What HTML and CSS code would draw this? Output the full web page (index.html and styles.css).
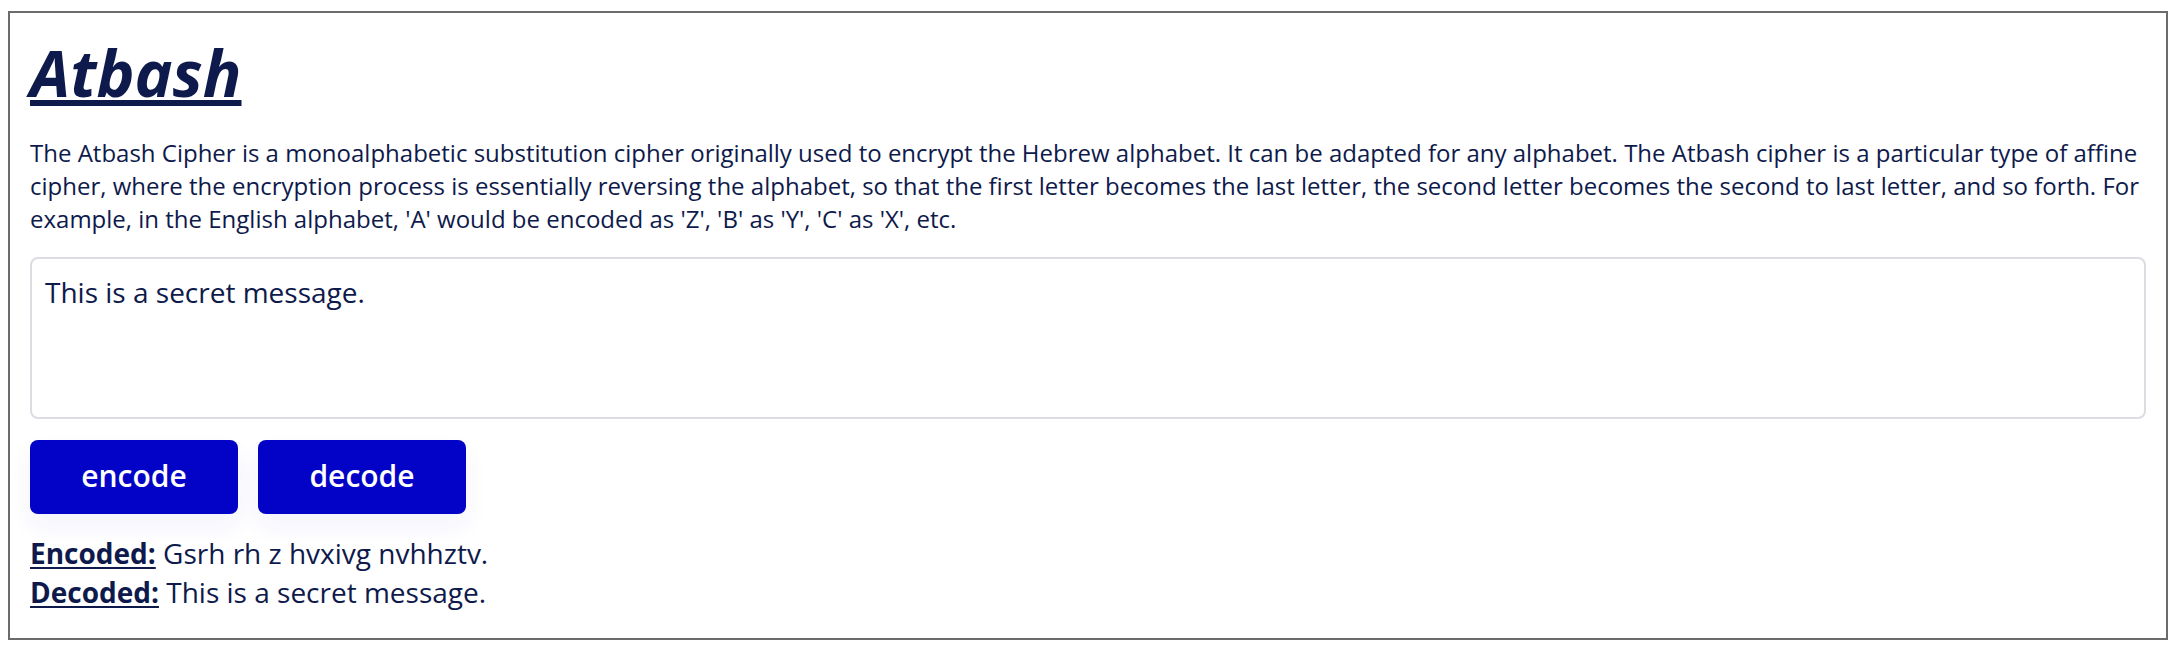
FILE: index.html
```html
<!DOCTYPE html>
<html lang="en">
<head>
<meta charset="utf-8">
<title>Atbash</title>
<link rel="stylesheet" href="styles.css">
</head>
<body>
<main class="card">
  <h1 class="title">Atbash</h1>
  <p class="intro">The Atbash Cipher is a monoalphabetic substitution cipher originally used to encrypt the Hebrew alphabet. It can be adapted for any alphabet. The Atbash cipher is a particular type of affine cipher, where the encryption process is essentially reversing the alphabet, so that the first letter becomes the last letter, the second letter becomes the second to last letter, and so forth. For example, in the English alphabet, 'A' would be encoded as 'Z', 'B' as 'Y', 'C' as 'X', etc.</p>
  <textarea class="input">This is a secret message.</textarea>
  <div class="actions">
    <button class="btn" type="button">encode</button>
    <button class="btn" type="button">decode</button>
  </div>
  <div class="results">
    <div class="result"><span class="label">Encoded:</span> Gsrh rh z hvxivg nvhhztv.</div>
    <div class="result"><span class="label">Decoded:</span> This is a secret message.</div>
  </div>
</main>
</body>
</html>
```
FILE: styles.css
```css
html, body {
  background: #ffffff;
}
body {
  margin: 11px 12px 10px 8px;
  font-family: "Open Sans", "Noto Sans", sans-serif;
  color: #0e1a4b;
}
.card {
  border: 2px solid #6b6b6b;
  padding: 16px 20px 26px 20px;
  height: 629px;
  box-sizing: border-box;
}
.title {
  margin: 0 0 20px 0;
  font-size: 64px;
  font-weight: 700;
  font-style: italic;
  line-height: normal;
  color: #0e1a4b;
  display: inline-block;
  text-decoration: underline;
  text-decoration-thickness: 6px;
  text-underline-offset: 3px;
}
.intro {
  margin: 0 0 22px 0;
  font-size: 24px;
  line-height: normal;
}
.input {
  display: block;
  width: 100%;
  height: 162px;
  box-sizing: border-box;
  margin: 0 0 21px 0;
  padding: 14px 13px;
  border: 2px solid #dcdce2;
  border-radius: 8px;
  font-family: "Open Sans", "Noto Sans", sans-serif;
  font-size: 28px;
  line-height: normal;
  color: #0e1a4b;
  resize: none;
  outline: none;
}
.actions {
  display: flex;
  gap: 20px;
  margin-bottom: 20px;
}
.btn {
  width: 208px;
  height: 74px;
  border: none;
  border-radius: 8px;
  background: #0303c8;
  color: #ffffff;
  font-family: "Open Sans", "Noto Sans", sans-serif;
  font-size: 30px;
  font-weight: 600;
  padding: 0 0 4px 0;
  box-shadow: 0 12px 24px rgba(40, 40, 200, 0.06);
  cursor: pointer;
}
.results {
  font-size: 28px;
  line-height: 39.3px;
}
.label {
  font-weight: 700;
  text-decoration: underline;
  text-decoration-thickness: 2px;
  text-underline-offset: 3px;
}
```
